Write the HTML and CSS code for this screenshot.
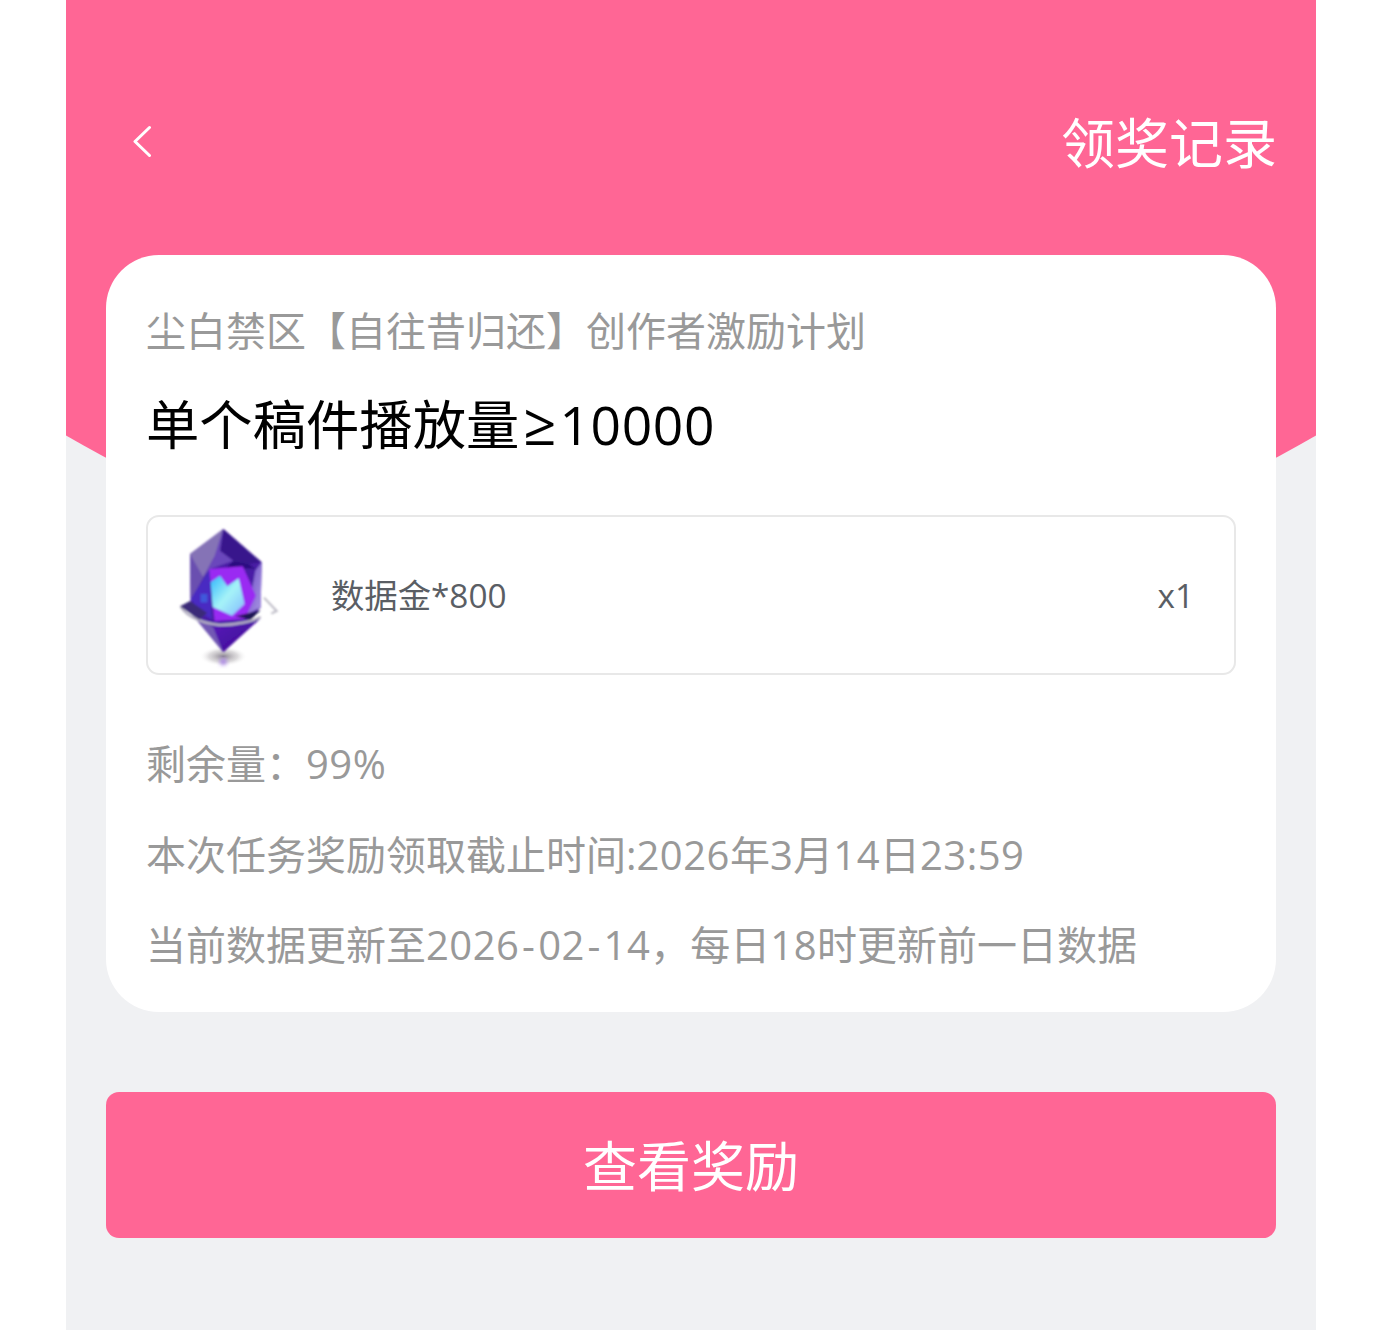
FILE: index.html
```html
<!DOCTYPE html>
<html lang="zh-CN">
<head>
<meta charset="utf-8">
<title>领奖记录</title>
<link rel="stylesheet" href="styles.css">
</head>
<body>
<main class="page">
  <div class="hero-bg"></div>
  <header class="topbar">
    <svg class="back" viewBox="0 0 20 36" width="20" height="36"><path d="M16.5 3.5 2 17.5 16.5 31.5" fill="none" stroke="#fff" stroke-width="3" stroke-linecap="round" stroke-linejoin="round"/></svg>
    <span class="record">领奖记录</span>
  </header>
  <section class="card">
    <p class="activity">尘白禁区【自往昔归还】创作者激励计划</p>
    <h1 class="goal">单个稿件播放量<span class="gte">≥</span><span class="num">10000</span></h1>
    <div class="reward">
      <svg class="gem" viewBox="0 0 345 450" width="115" height="150">
        <defs>
          <radialGradient id="shadow"><stop offset="0" stop-color="#77707c" stop-opacity=".85"/><stop offset=".6" stop-color="#b5b1b5" stop-opacity=".45"/><stop offset="1" stop-color="#fff" stop-opacity="0"/></radialGradient>
          <linearGradient id="core" x1="0" y1="0" x2="1" y2="1"><stop offset="0" stop-color="#2fb6fb"/><stop offset=".5" stop-color="#a6f3f8"/><stop offset=".8" stop-color="#8fd0fb"/><stop offset="1" stop-color="#c45cf0"/></linearGradient>
          <linearGradient id="side" x1="0" y1="0" x2="1" y2="1"><stop offset="0" stop-color="#6d4dc4"/><stop offset="1" stop-color="#a996e4"/></linearGradient>
          <linearGradient id="lower" x1="0" y1="0" x2="1" y2="1"><stop offset="0" stop-color="#5a1bbc"/><stop offset="1" stop-color="#38088e"/></linearGradient>
          <filter id="soft" x="-5%" y="-5%" width="110%" height="110%"><feGaussianBlur stdDeviation="3"/></filter>
          <filter id="softer" x="-50%" y="-50%" width="200%" height="200%"><feGaussianBlur stdDeviation="7"/></filter>
        </defs>
        <ellipse cx="160" cy="412" rx="72" ry="30" fill="url(#shadow)"/>
        <circle cx="160" cy="428" r="10" fill="#a883e6" filter="url(#softer)"/>
        <g filter="url(#soft)">
          <polygon points="160,30 275,130 272,265 160,400 62,280 60,105" fill="#4a1ea6"/>
          <polygon points="160,30 60,105 62,240 100,175 135,110" fill="#8573b6"/>
          <polygon points="60,105 100,175 62,240" fill="#6a4fb0"/>
          <polygon points="160,30 135,110 100,175 120,150 190,125" fill="#6a46bc"/>
          <polygon points="160,30 275,130 235,135 190,125 150,95" fill="#37168c"/>
          <polygon points="190,125 235,135 258,150 215,148 160,155" fill="#2c1080"/>
          <polygon points="275,130 272,265 232,285 256,155" fill="url(#side)"/>
          <polygon points="62,240 120,150 125,300 95,285" fill="#4a2cc2"/>
          <polygon points="118,150 218,142 258,230 224,300 134,306" fill="#9a2bf2"/>
          <polygon points="122,190 150,170 172,202 206,178 224,256 186,290 128,264" fill="url(#core)"/>
          <polygon points="92,225 112,225 112,250 92,250" fill="#3a7ff0" opacity=".55"/>
          <polygon points="60,280 130,325 160,400" fill="#7258b4"/>
          <polygon points="130,325 272,298 160,400" fill="url(#lower)"/>
          <path d="M32 262C52 296 104 314 150 318 200 318 250 306 272 294" fill="none" stroke="#b3afc2" stroke-width="7"/>
          <path d="M30 262 60 246 112 282 88 302Z" fill="#3b2c78"/>
          <path d="M196 292 272 274 242 302Z" fill="#1c1552"/>
          <path d="M282 236 320 276 304 284" fill="none" stroke="#bdbbc6" stroke-width="6"/>
        </g>
      </svg>
      <span class="reward-name">数据金*800</span>
      <span class="reward-count">x1</span>
    </div>
    <div class="details">
      <p>剩余量：<span class="num">99%</span></p>
      <p>本次任务奖励领取截止时间:<span class="num">2026</span>年<span class="num">3</span>月<span class="num">14</span>日<span class="num">23:59</span></p>
      <p>当前数据更新至<span class="num">2026<span class="hy">-</span>02<span class="hy">-</span>14</span>，每日<span class="num">18</span>时更新前一日数据</p>
    </div>
  </section>
  <button class="cta" type="button">查看奖励</button>
  <h2 class="rules">领取说明</h2>
</main>
</body>
</html>
```
FILE: styles.css
```css
* { box-sizing: border-box; }
html, body { margin: 0; height: 100%; overflow: hidden; background: #fff; }
body { font-family: "Open Sans", "Noto Sans CJK SC", sans-serif; }
.page {
  position: relative;
  width: 1250px;
  height: 1330px;
  margin-left: 66px;
  padding: 0 40px;
  background: #f0f1f3;
  overflow: hidden;
}
.hero-bg {
  position: absolute;
  inset: 0 0 auto 0;
  height: 620px;
  background: #ff6695;
  clip-path: circle(1250px at 50% -647px);
}
.topbar {
  position: relative;
  display: flex;
  justify-content: space-between;
  align-items: center;
  height: 255px;
  padding: 0 0 0 27px;
  color: #fff;
}
.back { display: block; margin-top: 29px; }
.record { font-size: 54px; line-height: 72px; margin: 31px -1px 0 0; }
.card {
  position: relative;
  height: 757px;
  padding: 40px 40px 0;
  background: #fff;
  border-radius: 53px;
}
.activity { margin: 0; font-size: 40px; line-height: 72px; color: #999; }
.goal { margin: 22px 0 0; font-size: 53.33px; line-height: 72px; font-weight: 400; color: #000; }
.gte { margin: 0 3px 0 4px; font-size: 58px; line-height: 1; }
.num { letter-spacing: .012em; }
.hy { padding: 0 2.7px; }
.reward {
  display: flex;
  align-items: center;
  height: 160px;
  margin-top: 54px;
  padding: 0 40px 0 22px;
  border: 2px solid #e8e8e8;
  border-radius: 13px;
}
.gem { flex: none; margin: -2px 46px 0 0; }
.reward-name { flex: 1; font-size: 33.33px; line-height: 40px; color: #5a5e64; }
.reward-count { font-size: 33.33px; line-height: 40px; color: #5a5e64; }
.details { margin-top: 44px; font-size: 40px; line-height: 90.5px; color: #999; }
.details p { margin: 0; }
.cta {
  display: block;
  position: relative;
  width: 100%;
  height: 146px;
  margin-top: 80px;
  padding: 0 0 4px;
  border: 0;
  border-radius: 13px;
  background: #ff6695;
  color: #fff;
  font: inherit;
  font-size: 54px;
}
.rules { position: relative; margin: 76px 0 0; font-size: 40px; line-height: 72px; font-weight: 700; color: #000; }
```
